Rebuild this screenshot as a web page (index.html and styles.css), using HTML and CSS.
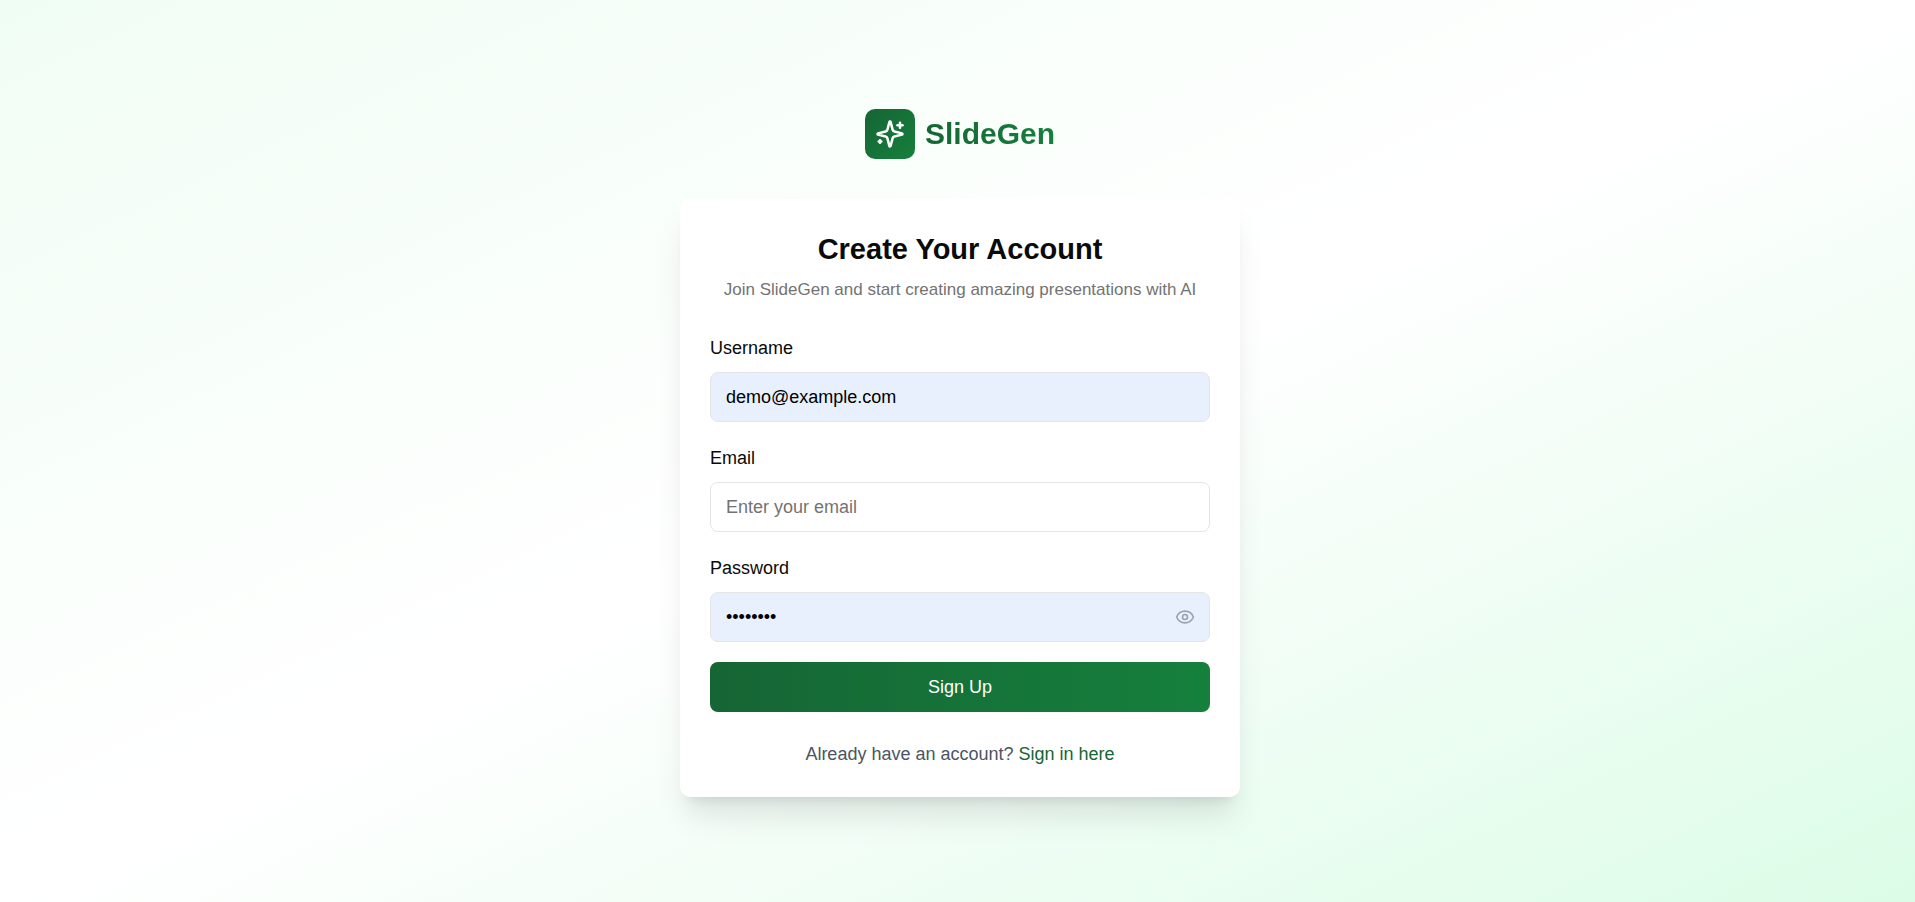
FILE: index.html
```html
<!DOCTYPE html>
<html lang="en">
<head>
<meta charset="utf-8">
<meta name="viewport" content="width=device-width, initial-scale=1">
<title>SlideGen</title>
<link rel="stylesheet" href="styles.css">
</head>
<body>
<main class="page">
  <div class="brand">
    <span class="brand-mark">
      <svg class="icon-brand" viewBox="0 0 24 24" aria-hidden="true">
        <path d="M9.937 15.5A2 2 0 0 0 8.5 14.063l-6.135-1.582a.5.5 0 0 1 0-.962L8.5 9.936A2 2 0 0 0 9.937 8.5l1.582-6.135a.5.5 0 0 1 .963 0L14.063 8.5A2 2 0 0 0 15.5 9.937l6.135 1.581a.5.5 0 0 1 0 .964L15.5 14.063a2 2 0 0 0-1.437 1.437l-1.582 6.135a.5.5 0 0 1-.963 0z"/>
        <path d="M20 3v4"/><path d="M22 5h-4"/><path d="M4 17v2"/><path d="M5 18H3"/>
      </svg>
    </span>
    <span class="brand-name">SlideGen</span>
  </div>
  <section class="card">
    <header class="card-header">
      <h1 class="title">Create Your Account</h1>
      <p class="subtitle">Join SlideGen and start creating amazing presentations with AI</p>
    </header>
    <form class="form">
      <div class="field">
        <label class="label" for="username">Username</label>
        <input class="input filled" id="username" type="text" value="demo@example.com">
      </div>
      <div class="field">
        <label class="label" for="email">Email</label>
        <input class="input" id="email" type="email" placeholder="Enter your email">
      </div>
      <div class="field">
        <label class="label" for="password">Password</label>
        <div class="password-box">
          <input class="input filled" id="password" type="password" value="password">
          <button class="reveal" type="button" aria-label="Show password">
            <svg class="icon-eye" viewBox="0 0 24 24" aria-hidden="true">
              <path d="M2.062 12.348a1 1 0 0 1 0-.696 10.75 10.75 0 0 1 19.876 0 1 1 0 0 1 0 .696 10.75 10.75 0 0 1-19.876 0"/>
              <circle cx="12" cy="12" r="3"/>
            </svg>
          </button>
        </div>
      </div>
      <button class="submit" type="submit">Sign Up</button>
    </form>
    <p class="switch">Already have an account? <a class="link" href="#">Sign in here</a></p>
  </section>
</main>
</body>
</html>
```
FILE: styles.css
```css
* {
  box-sizing: border-box;
}

body {
  margin: 0;
  font-family: "Liberation Sans", Arial, sans-serif;
  font-size: 18px;
  line-height: 25px;
  color: #0a0a0a;
}

.page {
  min-height: 100vh;
  padding: 24px 20px 20px 25px;
  display: flex;
  flex-direction: column;
  align-items: center;
  justify-content: center;
  gap: 40px;
  background: linear-gradient(to bottom right, #f0fdf4, #fff, #dcfce7);
}

.brand {
  display: flex;
  align-items: center;
  gap: 10px;
}

.brand-mark {
  display: flex;
  align-items: center;
  justify-content: center;
  width: 50px;
  height: 50px;
  border-radius: 10px;
  background: linear-gradient(to bottom right, #166534, #15803d);
}

.icon-brand,
.icon-eye {
  fill: none;
  stroke: currentColor;
  stroke-width: 2;
  stroke-linecap: round;
  stroke-linejoin: round;
}

.icon-brand {
  width: 30px;
  height: 30px;
  color: #fff;
}

.brand-name {
  font-size: 30px;
  line-height: 40px;
  font-weight: 700;
  color: transparent;
  background: linear-gradient(to right, #166534, #15803d);
  background-clip: text;
}

.card {
  width: 100%;
  max-width: 560px;
  padding: 30px;
  border-radius: 10px;
  background: #fff;
  box-shadow: 0 25px 31px -6px rgba(0, 0, 0, 0.1), 0 10px 12px -8px rgba(0, 0, 0, 0.1);
}

.card-header {
  display: flex;
  flex-direction: column;
  gap: 8px;
  margin-bottom: 30px;
  text-align: center;
}

.title,
.subtitle,
.switch {
  margin: 0;
}

.title {
  font-size: 29px;
  line-height: 40px;
  font-weight: 700;
}

.subtitle {
  font-size: 17px;
  color: #737373;
}

.form {
  display: flex;
  flex-direction: column;
  gap: 20px;
}

.field {
  display: flex;
  flex-direction: column;
  gap: 8px;
}

.label {
  line-height: 32px;
}

.input {
  width: 100%;
  height: 50px;
  padding: 0 15px;
  border: 1px solid #e5e5e5;
  border-radius: 8px;
  background: #fff;
  color: #0a0a0a;
  font: inherit;
}

.input::placeholder {
  color: #737373;
}

.filled {
  background: #e8f0fe;
  color: #000;
}

.password-box {
  position: relative;
}

.reveal {
  position: absolute;
  top: 0;
  right: 0;
  height: 100%;
  padding: 0 15px;
  display: flex;
  align-items: center;
  border: 0;
  background: none;
  color: #9ca3af;
}

.icon-eye {
  width: 20px;
  height: 20px;
}

.submit {
  height: 50px;
  border: 0;
  border-radius: 8px;
  background: linear-gradient(to right, #166534, #15803d);
  color: #fff;
  font: inherit;
}

.switch {
  margin-top: 30px;
  text-align: center;
  color: #4b5563;
}

.link {
  color: #166534;
  text-decoration: none;
}
```
